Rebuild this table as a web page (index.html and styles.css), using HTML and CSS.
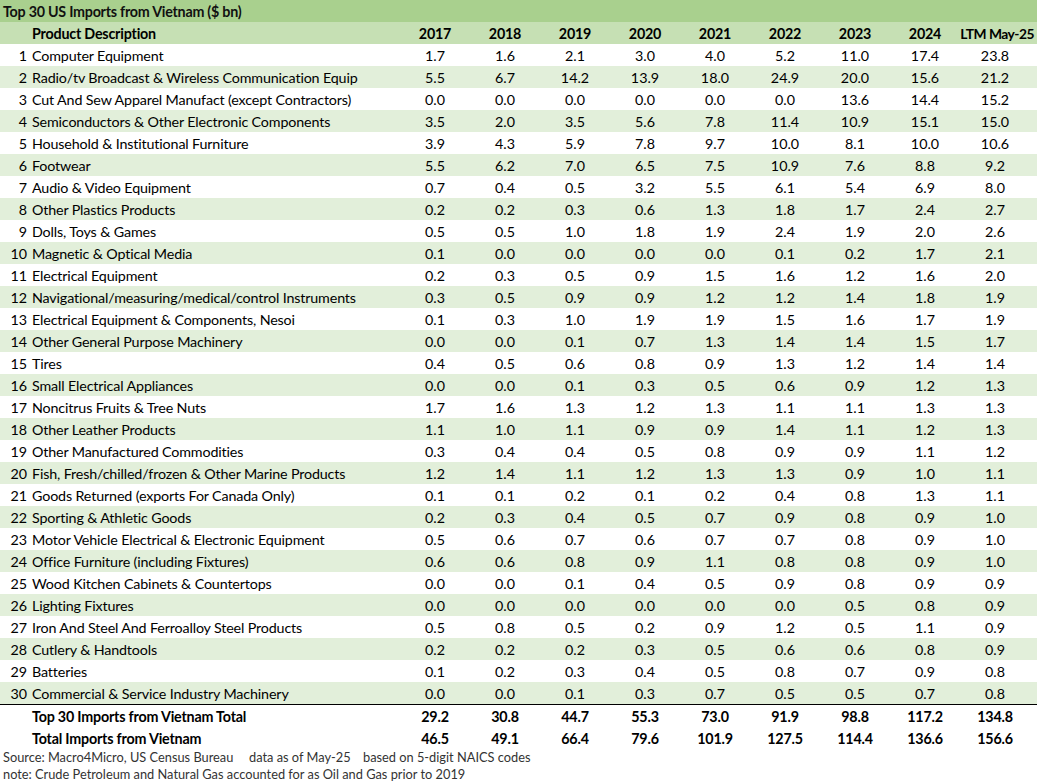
FILE: index.html
```html
<!DOCTYPE html>
<html>
<head>
<meta charset="utf-8">
<link rel="stylesheet" href="styles.css">
</head>
<body>
<div class="sheet">
  <div class="title">Top 30 US Imports from Vietnam ($ bn)</div>
  <div class="row head">
    <div class="num"></div><div class="desc">Product Description</div>
    <div class="v">2017</div><div class="v">2018</div><div class="v">2019</div><div class="v">2020</div><div class="v">2021</div><div class="v">2022</div><div class="v">2023</div><div class="v">2024</div><div class="v ltm">LTM May-25</div>
  </div>
  <div id="rows"></div>
  <div class="row total first">
    <div class="num"></div><div class="desc">Top 30 Imports from Vietnam Total</div>
    <div class="v">29.2</div><div class="v">30.8</div><div class="v">44.7</div><div class="v">55.3</div><div class="v">73.0</div><div class="v">91.9</div><div class="v">98.8</div><div class="v">117.2</div><div class="v">134.8</div>
  </div>
  <div class="row total">
    <div class="num"></div><div class="desc">Total Imports from Vietnam</div>
    <div class="v">46.5</div><div class="v">49.1</div><div class="v">66.4</div><div class="v">79.6</div><div class="v">101.9</div><div class="v">127.5</div><div class="v">114.4</div><div class="v">136.6</div><div class="v">156.6</div>
  </div>
  <div class="foot">
    <span class="src">Source: Macro4Micro, US Census Bureau</span><span class="asof">data as of May-25</span><span>based on 5-digit NAICS codes</span>
  </div>
  <div class="foot note">note: Crude Petroleum and Natural Gas accounted for as Oil and Gas prior to 2019</div>
</div>
<script src="app.js"></script>
</body>
</html>
```

FILE: app.js
```js
const data = [
["Computer Equipment","1.7","1.6","2.1","3.0","4.0","5.2","11.0","17.4","23.8"],
["Radio/tv Broadcast & Wireless Communication Equip","5.5","6.7","14.2","13.9","18.0","24.9","20.0","15.6","21.2"],
["Cut And Sew Apparel Manufact (except Contractors)","0.0","0.0","0.0","0.0","0.0","0.0","13.6","14.4","15.2"],
["Semiconductors & Other Electronic Components","3.5","2.0","3.5","5.6","7.8","11.4","10.9","15.1","15.0"],
["Household & Institutional Furniture","3.9","4.3","5.9","7.8","9.7","10.0","8.1","10.0","10.6"],
["Footwear","5.5","6.2","7.0","6.5","7.5","10.9","7.6","8.8","9.2"],
["Audio & Video Equipment","0.7","0.4","0.5","3.2","5.5","6.1","5.4","6.9","8.0"],
["Other Plastics Products","0.2","0.2","0.3","0.6","1.3","1.8","1.7","2.4","2.7"],
["Dolls, Toys & Games","0.5","0.5","1.0","1.8","1.9","2.4","1.9","2.0","2.6"],
["Magnetic & Optical Media","0.1","0.0","0.0","0.0","0.0","0.1","0.2","1.7","2.1"],
["Electrical Equipment","0.2","0.3","0.5","0.9","1.5","1.6","1.2","1.6","2.0"],
["Navigational/measuring/medical/control Instruments","0.3","0.5","0.9","0.9","1.2","1.2","1.4","1.8","1.9"],
["Electrical Equipment & Components, Nesoi","0.1","0.3","1.0","1.9","1.9","1.5","1.6","1.7","1.9"],
["Other General Purpose Machinery","0.0","0.0","0.1","0.7","1.3","1.4","1.4","1.5","1.7"],
["Tires","0.4","0.5","0.6","0.8","0.9","1.3","1.2","1.4","1.4"],
["Small Electrical Appliances","0.0","0.0","0.1","0.3","0.5","0.6","0.9","1.2","1.3"],
["Noncitrus Fruits & Tree Nuts","1.7","1.6","1.3","1.2","1.3","1.1","1.1","1.3","1.3"],
["Other Leather Products","1.1","1.0","1.1","0.9","0.9","1.4","1.1","1.2","1.3"],
["Other Manufactured Commodities","0.3","0.4","0.4","0.5","0.8","0.9","0.9","1.1","1.2"],
["Fish, Fresh/chilled/frozen & Other Marine Products","1.2","1.4","1.1","1.2","1.3","1.3","0.9","1.0","1.1"],
["Goods Returned (exports For Canada Only)","0.1","0.1","0.2","0.1","0.2","0.4","0.8","1.3","1.1"],
["Sporting & Athletic Goods","0.2","0.3","0.4","0.5","0.7","0.9","0.8","0.9","1.0"],
["Motor Vehicle Electrical & Electronic Equipment","0.5","0.6","0.7","0.6","0.7","0.7","0.8","0.9","1.0"],
["Office Furniture (including Fixtures)","0.6","0.6","0.8","0.9","1.1","0.8","0.8","0.9","1.0"],
["Wood Kitchen Cabinets & Countertops","0.0","0.0","0.1","0.4","0.5","0.9","0.8","0.9","0.9"],
["Lighting Fixtures","0.0","0.0","0.0","0.0","0.0","0.0","0.5","0.8","0.9"],
["Iron And Steel And Ferroalloy Steel Products","0.5","0.8","0.5","0.2","0.9","1.2","0.5","1.1","0.9"],
["Cutlery & Handtools","0.2","0.2","0.2","0.3","0.5","0.6","0.6","0.8","0.9"],
["Batteries","0.1","0.2","0.3","0.4","0.5","0.8","0.7","0.9","0.8"],
["Commercial & Service Industry Machinery","0.0","0.0","0.1","0.3","0.7","0.5","0.5","0.7","0.8"]
];
const host = document.getElementById('rows');
data.forEach((r, i) => {
  const row = document.createElement('div');
  row.className = 'row data' + (i % 2 ? ' alt' : '');
  let html = '<div class="num">' + (i + 1) + '</div><div class="desc"></div>';
  for (let k = 1; k < r.length; k++) html += '<div class="v">' + r[k] + '</div>';
  row.innerHTML = html;
  row.querySelector('.desc').textContent = r[0];
  host.appendChild(row);
});
```

FILE: styles.css
```css
html, body {
  margin: 0;
  padding: 0;
  background: #fff;
}
body {
  font-family: Lato, "Open Sans", sans-serif;
  font-size: 14.3px;
  color: #000;
}
.sheet {
  width: 1037px;
}
.title {
  height: 22px;
  line-height: 23px;
  background: #a9d08e;
  font-weight: bold;
  padding-left: 3px;
  letter-spacing: -0.25px;
  color: #111;
}
.row {
  display: grid;
  grid-template-columns: 28px 372px repeat(9, 70px);
  height: 22px;
  line-height: 23px;
  white-space: nowrap;
}
.row.data .desc {
  letter-spacing: -0.15px;
}
.row.head {
  background: #c6e0b4;
  font-weight: bold;
  letter-spacing: -0.2px;
}
.row.head .ltm {
  letter-spacing: -0.5px;
  font-size: 13.8px;
  text-align: right;
  padding-right: 4px;
  margin-right: -8px;
}
.row.alt {
  background: #e2efda;
}
.num {
  text-align: right;
  padding-right: 1px;
}
.desc {
  padding-left: 4px;
}
.v {
  text-align: center;
}
.row.total {
  font-weight: bold;
  letter-spacing: -0.2px;
}
.row.total.first {
  border-top: 1px solid #000;
}
.foot {
  height: 17px;
  line-height: 17px;
  padding-left: 3px;
  color: #333;
  white-space: nowrap;
  font-size: 12.8px;
}
.src {
  display: inline-block;
  width: 246px;
}
.asof {
  display: inline-block;
  width: 114px;
}
```
